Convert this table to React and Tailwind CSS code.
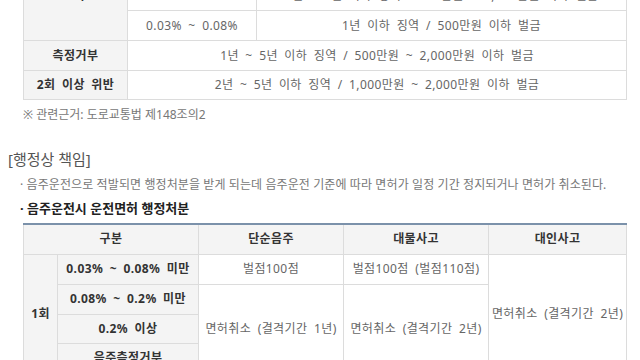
import React from 'react';

const font = { fontFamily: '"Noto Sans", "Noto Sans CJK KR", sans-serif' };

const th = 'border border-[#dcdcdc] bg-[#f4f4f4] font-bold text-[#333] text-center';
const td = 'border border-[#dcdcdc] bg-white text-[#666] text-center';

const PenaltyTable = () => (
  <table className="w-[604px] border-collapse table-fixed text-[12px] leading-none tracking-[0.4px] [word-spacing:3px]">
    <colgroup>
      <col className="w-[104px]" />
      <col className="w-[129px]" />
      <col />
    </colgroup>
    <tbody>
      <tr className="h-[30px]">
        <td rowSpan={3} className={th}>1회</td>
        <td className={td}>0.2% 이상</td>
        <td className={td}>2년 ~ 5년 이하 징역 / 1,000만원 ~ 2,000만원 이하 벌금</td>
      </tr>
      <tr className="h-[30px]">
        <td className={td}>0.08% ~ 0.2%</td>
        <td className={td}>1년 ~ 2년 이하 징역 / 500만원 ~ 1,000만원 이하 벌금</td>
      </tr>
      <tr className="h-[30px]">
        <td className={td}>0.03% ~ 0.08%</td>
        <td className={td}>1년 이하 징역 / 500만원 이하 벌금</td>
      </tr>
      <tr className="h-[30px]">
        <td className={th}>측정거부</td>
        <td colSpan={2} className={td}>1년 ~ 5년 이하 징역 / 500만원 ~ 2,000만원 이하 벌금</td>
      </tr>
      <tr className="h-[29px]">
        <td className={th}>2회 이상 위반</td>
        <td colSpan={2} className={td}>2년 ~ 5년 이하 징역 / 1,000만원 ~ 2,000만원 이하 벌금</td>
      </tr>
    </tbody>
  </table>
);

const LicenseTable = () => (
  <table className="w-[604px] border-collapse table-fixed text-[12px] leading-none tracking-[0.4px] [word-spacing:3px] border-t-2 border-t-[#7b91aa]">
    <colgroup>
      <col className="w-[34px]" />
      <col className="w-[141px]" />
      <col className="w-[145px]" />
      <col className="w-[145px]" />
      <col />
    </colgroup>
    <thead>
      <tr className="h-[30px]">
        <th colSpan={2} className={th}>구분</th>
        <th className={th}>단순음주</th>
        <th className={th}>대물사고</th>
        <th className={th}>대인사고</th>
      </tr>
    </thead>
    <tbody>
      <tr className="h-[30px]">
        <td rowSpan={4} className={th}>1회</td>
        <td className={th}>0.03% ~ 0.08% 미만</td>
        <td className={td}>벌점100점</td>
        <td className={td}>벌점100점 (벌점110점)</td>
        <td rowSpan={4} className={td}>면허취소 (결격기간 2년)</td>
      </tr>
      <tr className="h-[30px]">
        <td className={th}>0.08% ~ 0.2% 미만</td>
        <td rowSpan={3} className={td}>면허취소 (결격기간 1년)</td>
        <td rowSpan={3} className={td}>면허취소 (결격기간 2년)</td>
      </tr>
      <tr className="h-[29px]">
        <td className={th}>0.2% 이상</td>
      </tr>
      <tr className="h-[30px]">
        <td className={th}>음주측정거부</td>
      </tr>
    </tbody>
  </table>
);

export default function App() {
  return (
    <div className="w-[640px] h-[360px] overflow-hidden bg-white" style={font}>
      <div className="-mt-[50px] pl-[23px]">
        <PenaltyTable />
        <p className="mt-[8px] text-[12px] leading-[14px] text-[#777]">※ 관련근거: 도로교통법 제148조의2</p>
      </div>
      <div className="mt-[28px] pl-[8px]">
        <h3 className="text-[15px] leading-[18px] text-[#555]">[행정상 책임]</h3>
        <p className="mt-[9px] pl-[12px] text-[12px] leading-[16px] text-[#777] tracking-[0.1px]">
          · 음주운전으로 적발되면 행정처분을 받게 되는데 음주운전 기준에 따라 면허가 일정 기간 정지되거나 면허가 취소된다.
        </p>
        <p className="mt-[7px] pl-[12px] text-[13px] leading-[16px] font-bold text-[#222]">· 음주운전시 운전면허 행정처분</p>
      </div>
      <div className="mt-[7px] pl-[23px]">
        <LicenseTable />
      </div>
    </div>
  );
}
